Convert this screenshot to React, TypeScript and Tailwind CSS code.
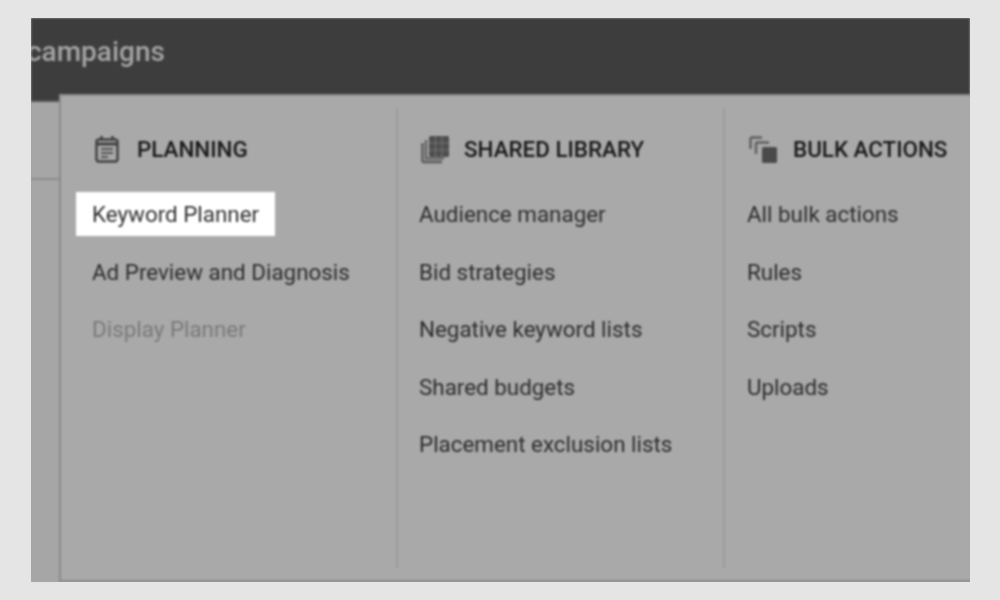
import type { ReactNode } from "react";

function CalendarIcon() {
  return (
    <svg width="24" height="28" viewBox="0 0 24 28" fill="none" stroke="#3f3f3f" strokeWidth="2.400">
      <rect x="1.500" y="3.500" width="21" height="22" rx="2.500" />
      <path d="M1.500 8h21" strokeWidth="3" />
      <path d="M6.500 0v4M17.500 0v4" strokeWidth="2.500" />
      <path d="M6 13h12M6 17h12M6 21h7" strokeWidth="1.800" stroke="#555555" />
    </svg>
  );
}

function LibraryIcon() {
  return (
    <svg width="28" height="28" viewBox="0 0 28 28" fill="none">
      <path d="M1.500 7v17.500a1.500 1.500 0 0 0 1.500 1.500H21" stroke="#5a5a5a" strokeWidth="2.400" />
      <path d="M5 4v18.500H23" stroke="#5a5a5a" strokeWidth="2" />
      <rect x="8" y="0" width="20" height="21" rx="1.500" fill="#4e4e4e" />
      <path d="M14.500 0v21M21 0v21M8 7h20M8 14h20" stroke="#747474" strokeWidth="1" />
    </svg>
  );
}

function BulkIcon() {
  return (
    <svg width="28" height="28" viewBox="0 0 28 28" fill="none">
      <path d="M1.500 13V3A1.500 1.500 0 0 1 3 1.500H13" stroke="#5f5f5f" strokeWidth="2.400" />
      <path d="M7 18V8A1.500 1.500 0 0 1 8.500 6.500H20" stroke="#5f5f5f" strokeWidth="2.400" />
      <rect x="13" y="11" width="15" height="16" rx="1.500" fill="#4a4a4a" />
    </svg>
  );
}

function Column({
  icon,
  title,
  items,
  divider,
  width,
  labelGap,
  headPad,
  listPad,
}: {
  icon: ReactNode;
  title: string;
  items: { label: string; active?: boolean; disabled?: boolean }[];
  divider?: boolean;
  width: string;
  labelGap: string;
  headPad: string;
  listPad: string;
}) {
  return (
    <div className={`${width} shrink-0 mt-[12px] flex flex-col ${divider ? "border-r-2 border-[#9b9b9b]" : ""}`}>
      <div className={`flex items-center h-[28px] mt-[28px] ${headPad} ${labelGap}`}>
        {icon}
        <span className="text-[22.400px] font-medium text-[#181818] whitespace-nowrap">{title}</span>
      </div>
      <ul className={`mt-[28px] flex flex-col gap-[13.500px] ${listPad}`}>
        {items.map((item) => (
          <li
            key={item.label}
            className={`h-[44px] flex items-center px-[16px] w-fit text-[22.400px] whitespace-nowrap ${
              item.active ? "bg-white text-[#303030]" : item.disabled ? "text-[#7a7a7a]" : "text-[#2c2c2c]"
            }`}
          >
            <span className="translate-y-[1px]">{item.label}</span>
          </li>
        ))}
      </ul>
    </div>
  );
}

export default function App() {
  return (
    <div className="w-[1000px] h-[600px] bg-[#e5e5e5] pt-[18px] pl-[31px] font-['Roboto',sans-serif]">
      <div className="w-[939px] h-[564px] overflow-hidden bg-[#a6a6a6]">
        <div className="relative w-[939px] h-[564px] blur-[0.8px]">
          <div className="h-[84px] bg-[#3d3d3d] border-b-2 border-[#555555]">
            <div className="ml-[-4px] pt-[14px] text-[28px] leading-[40px] font-medium text-[#a4a4a4]">campaigns</div>
          </div>
          <div className="h-[78px] border-b-2 border-[#8c8c8c]" />

          <div className="absolute left-[28px] top-[76px] w-[930px] h-[488px] bg-[#a9a9a9] flex items-stretch border-l-2 border-t-2 border-b-2 border-[#8a8a8a] pb-[12px]">
            <Column
              width="w-[337px]"
              labelGap="gap-[18px]"
              headPad="pl-[34px]"
              listPad="pl-[15px]"
              divider
              icon={<CalendarIcon />}
              title="PLANNING"
              items={[
                { label: "Keyword Planner", active: true },
                { label: "Ad Preview and Diagnosis" },
                { label: "Display Planner", disabled: true },
              ]}
            />
            <Column
              width="w-[327px]"
              labelGap="gap-[15px]"
              headPad="pl-[23px]"
              listPad="pl-[5px]"
              divider
              icon={<LibraryIcon />}
              title="SHARED LIBRARY"
              items={[
                { label: "Audience manager" },
                { label: "Bid strategies" },
                { label: "Negative keyword lists" },
                { label: "Shared budgets" },
                { label: "Placement exclusion lists" },
              ]}
            />
            <Column
              width="w-[260px]"
              labelGap="gap-[16px]"
              headPad="pl-[24px]"
              listPad="pl-[6px]"
              icon={<BulkIcon />}
              title="BULK ACTIONS"
              items={[
                { label: "All bulk actions" },
                { label: "Rules" },
                { label: "Scripts" },
                { label: "Uploads" },
              ]}
            />
          </div>
        </div>
      </div>
    </div>
  );
}
